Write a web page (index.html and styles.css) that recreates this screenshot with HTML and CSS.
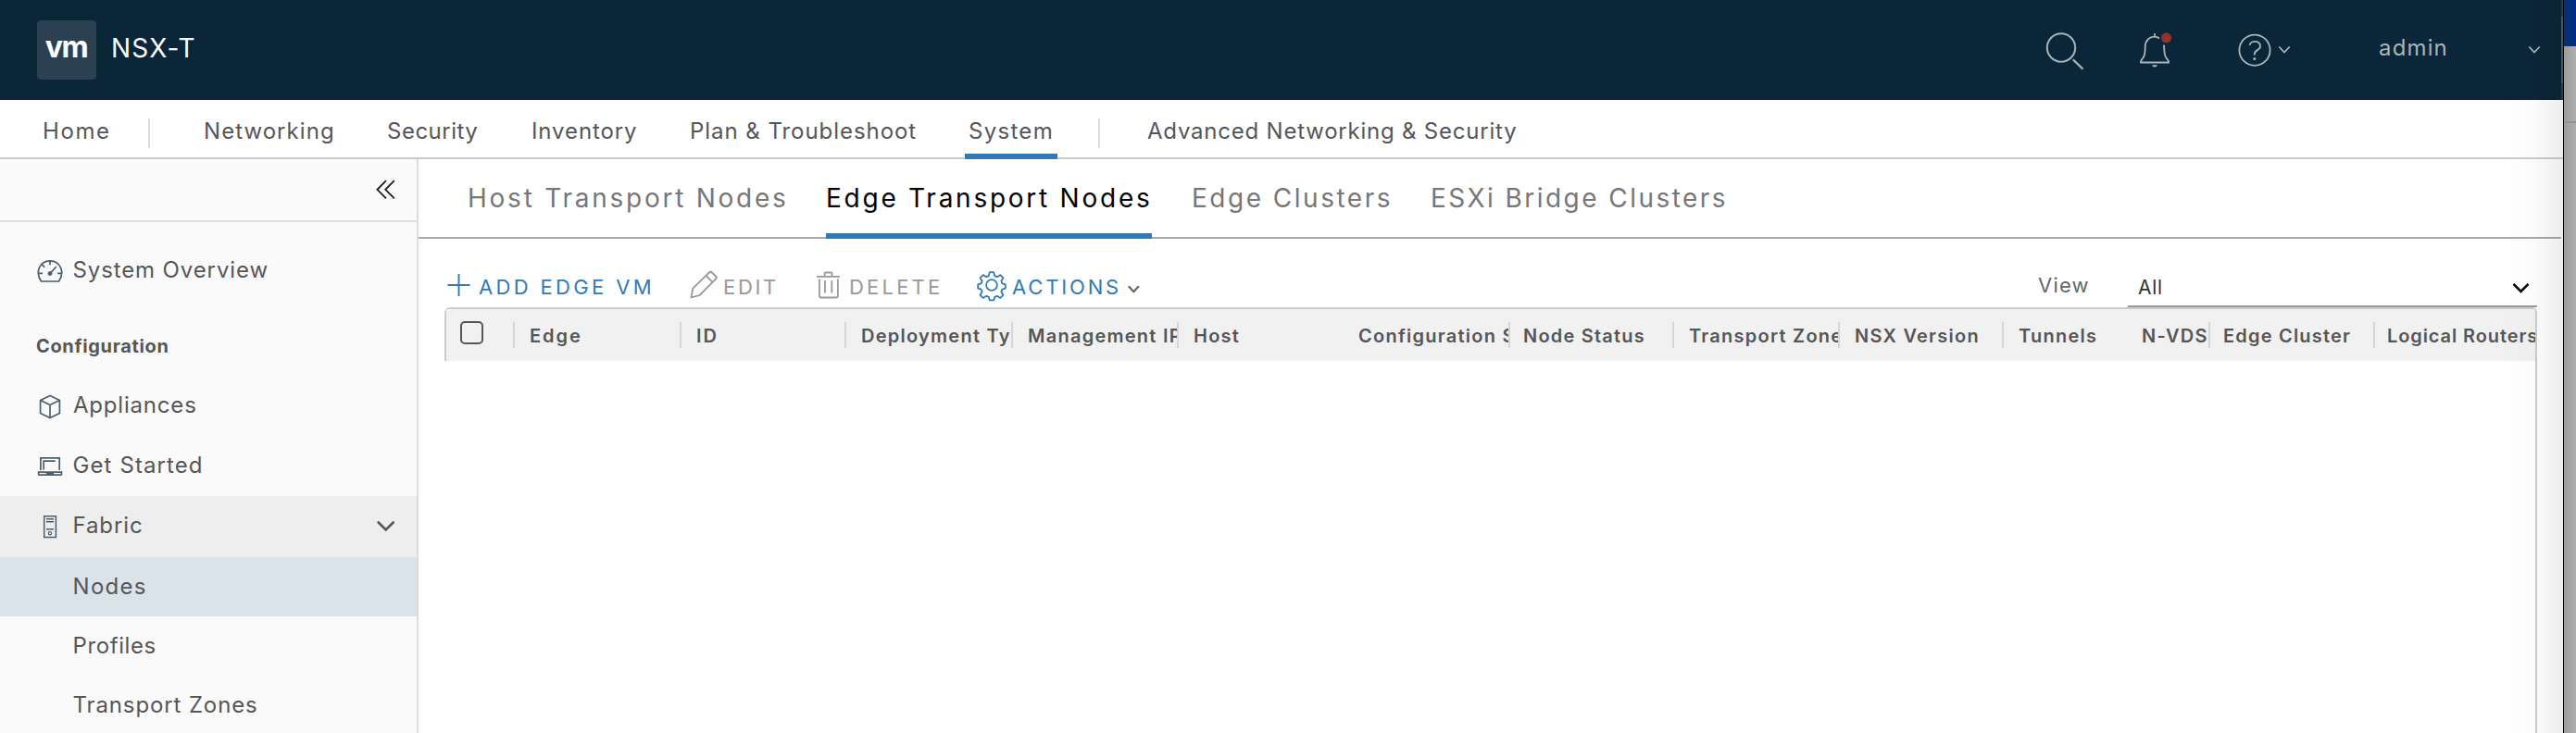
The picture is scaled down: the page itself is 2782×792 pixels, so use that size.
FILE: index.html
```html
<!DOCTYPE html>
<html lang="en">
<head>
<meta charset="utf-8">
<title>NSX-T</title>
<link rel="stylesheet" href="styles.css">
</head>
<body>
<div class="window">
  <header class="topbar">
    <div class="logo">vm</div>
    <div class="product">NSX-T</div>
    <div class="top-actions">
      <svg class="ico-search" viewBox="2200 0 60 108" fill="none" stroke="#a9b4bb" stroke-width="2"><circle cx="2226" cy="51.5" r="15.2"/><path d="M2239.5 65l9.3 9" stroke-width="2.4" stroke-linecap="round"/></svg>
      <svg class="ico-bell" viewBox="2300 0 60 108" fill="none" stroke="#a9b4bb" stroke-width="1.8"><path d="M2332 41.5Q2329.500 39.600 2327 39.600C2320.500 39.600 2316.700 44.500 2316.700 50.500C2316.700 60 2315.500 61.500 2312 66V67.500H2342V66C2338 61 2337.500 59 2337.300 53.500L2337 48.500M2327 36v4"/><path d="M2324 70.300h6q-.6 2.200-3 2.200t-3-2.200z" fill="#a9b4bb" stroke="none"/><circle cx="2339.600" cy="40.800" r="5.500" fill="#93332a" stroke="none"/></svg>
      <svg class="ico-help" viewBox="2410 0 70 108" fill="none" stroke="#a9b4bb" stroke-width="1.8"><circle cx="2435" cy="54.200" r="16.600"/><path d="M2429.500 48.800C2430.500 43.500 2441 43.300 2441 50C2441 54.800 2434.800 53.500 2434.800 58.500V59.600"/><circle cx="2434.800" cy="63.500" r="1.500" fill="#a9b4bb" stroke="none"/><path d="M2461.300 50.500l5.700 6 5.700-6"/></svg>
      <div class="user">admin</div>
      <svg class="ico-user" viewBox="2720 0 40 108" fill="none" stroke="#a9b4bb" stroke-width="1.8"><path d="M2731.300 50.500l5.700 6 5.700-6"/></svg>
    </div>
  </header>
  <nav class="mainnav">
    <a class="home">Home</a><i></i>
    <a class="n-net">Networking</a>
    <a class="n-sec">Security</a>
    <a class="n-inv">Inventory</a>
    <a class="n-plan">Plan &amp; Troubleshoot</a>
    <a class="n-sys active">System</a><i></i>
    <a class="n-adv">Advanced Networking &amp; Security</a>
  </nav>
  <div class="body">
    <aside class="sidebar">
      <div class="collapse"><svg viewBox="405 172 24 66" fill="none" stroke="#222" stroke-width="1.900"><path d="M417 195.200l-9.500 9.600 9.500 9.600M425.800 195.200l-9.500 9.600 9.500 9.600"/></svg></div>
      <div class="item overview">
        <svg viewBox="40 260 28 64" fill="none" stroke="#4d5f6e" stroke-width="1.700"><path d="M44.500 304C37.500 294 43 281.800 54 281.800S70.500 294 63.500 304zM54 282v4.200M45.600 286.200l2.600 2.600M41.800 295.300h4.200M62.200 295.300h4.200M55 294.500l5.800-6.500"/><circle cx="54" cy="295.500" r="2" fill="#4d5f6e" stroke-width="1"/></svg>
        <span>System Overview</span></div>
      <div class="heading">Configuration</div>
      <div class="item">
        <svg viewBox="40 406 28 65" fill="none" stroke="#4d5f6e" stroke-width="1.700" stroke-linejoin="round"><path d="M54 427.400l10.400 5v14L54 451.400l-10.400-5v-14zM43.600 432.400L54 437.400l10.400-5M54 437.400v14"/></svg>
        <span class="appl">Appliances</span></div>
      <div class="item">
        <svg viewBox="40 471 28 65" fill="none" stroke="#4d5f6e" stroke-width="1.700"><path d="M43.900 508v-13.200h20.300V508M47.200 507.500v-9.300h12.500M41.600 510.200h24.900v2q0 1-1 1h-22.900q-1 0-1-1zM50 511.500h8"/></svg>
        <span class="get">Get Started</span></div>
      <div class="item group">
        <svg viewBox="40 536 28 66" fill="none" stroke="#4d5f6e" stroke-width="1.500"><path d="M47.700 557.700h12.700v22.700H47.700zM50 560.800h8M50 563.800h8M50 571.800h8"/><circle cx="54" cy="576.200" r="1.600" stroke-width="1.200"/></svg>
        <span>Fabric</span>
        <svg class="caret" viewBox="405 536 24 66" fill="none" stroke="#565656" stroke-width="2.600" stroke-linecap="round"><path d="M408.700 564.500l8 8 8-8"/></svg></div>
      <div class="item sub selected"><span>Nodes</span></div>
      <div class="item sub"><span class="prof">Profiles</span></div>
      <div class="item sub"><span>Transport Zones</span></div>
    </aside>
    <main class="content">
      <div class="tabs">
        <a class="t-host">Host Transport Nodes</a>
        <a class="t-edge active">Edge Transport Nodes</a>
        <a class="t-clus">Edge Clusters</a>
        <a class="t-esxi">ESXi Bridge Clusters</a>
      </div>
      <div class="toolbar">
        <a class="b-add"><svg viewBox="480 258 36 74" fill="none" stroke="#327ab7" stroke-width="1.900"><path d="M483.500 308h24M495.500 296v24"/></svg>ADD EDGE VM</a>
        <a class="b-edit"><svg viewBox="744 258 36 74" fill="none" stroke="#999" stroke-width="1.800" stroke-linejoin="round"><path d="M746.500 321.300l1.800-9.600 18.100-17.700q1-1 2 0l5 5q1 1 0 2l-17.800 18zM762.800 298.200l6.700 6.700"/></svg>EDIT</a>
        <a class="b-del"><svg viewBox="880 258 36 74" fill="none" stroke="#999" stroke-width="1.800"><path d="M882 298.800h25M890.500 298v-2.500q0-1 1-1h6q1 0 1 1v2.500M884.900 301.500v18q0 2 2 2h16q2 0 2-2v-18M891 303v13.500M898.300 303v13.500"/></svg>DELETE</a>
        <a class="b-act"><svg viewBox="1054 258 38 74" fill="none" stroke="#327ab7" stroke-width="1.800" stroke-linejoin="round"><circle cx="1071" cy="308" r="5.900"/><path d="M1068.800 294.200h4.400l1 3.900 2.600 1.100 3.500-2.100 3.100 3.100-2.100 3.500 1.100 2.600 3.400 1v4.400l-3.400 1-1.100 2.600 2.100 3.500-3.100 3.100-3.500-2.100-2.600 1.100-1 3.400h-4.400l-1-3.400-2.600-1.100-3.500 2.100-3.100-3.100 2.100-3.500-1.100-2.600-3.400-1v-4.400l3.400-1 1.100-2.600-2.100-3.500 3.100-3.100 3.500 2.100 2.600-1.100z"/></svg>ACTIONS<svg class="act-caret" viewBox="1215 258 20 74" fill="none" stroke="#666" stroke-width="2.200"><path d="M1219.800 309.200l5.500 6 5.500-6"/></svg></a>
        <label class="view">View</label>
        <div class="select"><span>All</span><svg viewBox="2710 258 24 72" fill="none" stroke="#000" stroke-width="2.600"><path d="M2714.500 306.800l8 8.200 8-8.200"/></svg></div>
      </div>
      <div class="grid">
        <div class="head">
          <div class="c-check"><b></b></div>
          <div class="c180 bar"><span class="edge">Edge</span></div>
          <div class="c178 bar"><span class="id">ID</span></div>
          <div class="c180 bar">Deployment Type</div>
          <div class="c179 bar">Management IP</div>
          <div class="c178 bar">Host</div>
          <div class="c180">Configuration State</div>
          <div class="c177 bar tight">Node Status</div>
          <div class="c179 bar">Transport Zones</div>
          <div class="c177 bar">NSX Version</div>
          <div class="c133 bar">Tunnels</div>
          <div class="c90">N-VDS</div>
          <div class="c178 bar tight">Edge Cluster</div>
          <div class="c176 bar last">Logical Routers</div>
        </div>
      </div>
    </main>
  </div>
  <div class="edge-shade"></div>
</div>
<div class="desktop"><div class="sky"></div><div class="wall"></div></div>
</body>
</html>
```
FILE: styles.css
```css
* { box-sizing: border-box; }
body {
  margin: 0;
  width: 2782px;
  height: 792px;
  overflow: hidden;
  display: flex;
  font-family: Inter, "Open Sans", sans-serif;
  font-size: 24px;
  letter-spacing: 1px;
  color: #565656;
  background: #fff;
  white-space: nowrap;
}
svg { display: block; flex: none; }
.window { position: relative; width: 2768px; height: 792px; flex: none; display: flex; flex-direction: column; }

/* top bar */
.topbar { position: relative; flex: none; height: 108px; display: flex; background: #0b2639; }
.topbar::after { content: ""; position: absolute; right: 0; top: 0; width: 2px; height: 108px; background: linear-gradient(#2c414e 18px, #4a5d67 18px 90px, #2c414e 90px); }
.logo {
  margin: 22px 0 0 40px; width: 64px; height: 64px; border-radius: 4px;
  background: #2b4151; color: #fff; font-size: 32px; font-weight: 700;
  line-height: 58px; text-align: center; letter-spacing: -1.5px;
  padding-right: 1px;
}
.product { margin-left: 16px; color: #fff; font-size: 28px; line-height: 104px; letter-spacing: 1.2px; }
.top-actions { margin-left: auto; display: flex; padding-right: 8px; }
.ico-search { width: 60px; height: 108px; margin-right: 40px; }
.ico-bell { width: 60px; height: 108px; margin-right: 50px; }
.ico-help { width: 70px; height: 108px; }
.user { width: 151px; margin-left: 89px; line-height: 103px; color: #a9b4bb; letter-spacing: 1.15px; }
.ico-user { width: 40px; height: 108px; }

/* main navigation */
.mainnav { flex: none; height: 64px; display: flex; box-shadow: inset 0 -2px #ccc; line-height: 67px; }
.mainnav a { flex: none; height: 64px; }
.mainnav i { flex: none; width: 2px; height: 32px; margin-top: 20px; background: #ddd; }
.mainnav .home { margin-left: 46px; width: 114px; letter-spacing: 1.6px; }
.n-net { margin-left: 58px; width: 198px; letter-spacing: 1.05px; }
.n-sec { width: 156px; letter-spacing: .5px; }
.n-inv { width: 171px; letter-spacing: .9px; }
.n-plan { width: 297px; letter-spacing: .95px; }
.n-sys { width: 100px; padding-left: 4px; margin-right: 44px; letter-spacing: 1.3px; }
.n-adv { margin-left: 51px; letter-spacing: .78px; }
.active { border-bottom: 6px solid #327ab7; }

.body { flex: 1; display: flex; min-height: 0; }

/* sidebar */
.sidebar { flex: none; width: 452px; background: #fafafa; border-right: 2px solid #ddd; overflow: hidden; }
.collapse { height: 68px; border-bottom: 2px solid #ddd; padding-left: 405px; }
.collapse svg { width: 24px; height: 66px; }
.item { height: 65px; padding-left: 40px; display: flex; line-height: 64px; }
.item > svg { width: 28px; height: 100%; }
.item span { margin-left: 10.5px; letter-spacing: .88px; }
.item .appl { margin-left: 11px; letter-spacing: .8px; }
.item .get { letter-spacing: 1.1px; }
.overview { height: 64px; line-height: 63px; margin-top: 20px; }
.heading { height: 41px; margin: 30px 0 11px; padding-left: 39px; line-height: 41px; font-size: 20px; font-weight: 700; letter-spacing: .65px; }
.item.group { height: 66px; line-height: 63px; background: #eee; }
.item .caret { width: 24px; margin-left: auto; margin-right: 21px; }
.item.sub { height: 64px; padding-left: 68px; line-height: 63px; }
.item.selected { background: #dae3ea; }
.selected span { letter-spacing: 1.3px; }
.item .prof { letter-spacing: .6px; }

/* content tabs */
.content { flex: none; width: 2316px; }
.tabs { height: 86px; width: 2314px; display: flex; box-shadow: inset 0 -2px #aaa; font-size: 28px; line-height: 85px; color: #777; letter-spacing: 2.75px; }
.tabs a { flex: none; height: 86px; }
.t-host { margin-left: 53px; width: 387px; }
.t-edge { width: 352px; color: #000; }
.t-clus { margin-left: 43px; width: 258px; letter-spacing: 2.5px; }
.t-esxi { letter-spacing: 2.45px; }

/* toolbar */
.toolbar { height: 74px; display: flex; font-size: 22px; line-height: 104px; color: #999; }
.toolbar a { flex: none; height: 74px; display: flex; letter-spacing: 3.2px; }
.toolbar a svg { width: 36px; height: 74px; }
.b-add { margin-left: 28px; width: 264px; color: #327ab7; }
.toolbar .b-add { letter-spacing: 3.35px; }
.b-add svg { margin-right: 1px; }
.b-edit { width: 136px; }
.toolbar .b-edit { letter-spacing: 2.7px; }
.b-edit svg, .b-del svg { margin-right: 1px; }
.b-del { width: 174px; }
.b-act { color: #327ab7; }
.toolbar .b-act { letter-spacing: 2.85px; }
.toolbar .b-act svg { width: 38px; margin-right: 1px; }
.toolbar .b-act .act-caret { width: 20px; margin-left: 3px; }
.view { margin-left: auto; width: 97px; line-height: 101px; color: #666; letter-spacing: 1.2px; }
.select { width: 442px; margin-right: 28px; border-bottom: 2px solid #999; display: flex; justify-content: space-between; padding: 0 6px 0 11px; font-size: 21px; line-height: 105px; color: #333; letter-spacing: .7px; }
.select svg { width: 24px; height: 72px; }

/* data grid */
.grid { width: 2260px; margin-left: 28px; height: 460px; border-top: 2px solid #ccc; border-right: 2px solid #ccc; border-radius: 6px 6px 0 0; overflow: hidden; }
.head { height: 56px; display: flex; background: #f1f1f1; border-left: 2px solid #ccc; font-size: 20px; font-weight: 600; line-height: 58px; letter-spacing: 1.25px; }
.head > div { flex: none; position: relative; height: 56px; overflow: hidden; padding-left: 18px; }
.head .bar { background: linear-gradient(#d6d6d6, #d6d6d6) 0 14px / 2px 28px no-repeat; }
.head .c-check { width: 72px; padding: 13px 0 0 15px; }
.c-check b { display: block; width: 25px; height: 25px; border: 2px solid #565656; border-radius: 5px; }
.c180 { width: 180px; }
.c179 { width: 179px; }
.c178 { width: 178px; }
.c177 { width: 177px; }
.c176 { width: 176px; }
.c133 { width: 133px; }
.c90 { width: 90px; }
.edge, .id { letter-spacing: 2px; }
.head > .tight { padding-left: 16px; letter-spacing: 1.2px; }
.head > .last { padding-left: 15px; letter-spacing: .9px; }

/* window edge and desktop behind it */
.edge-shade { position: absolute; right: 0; top: 0; width: 64px; height: 792px; background: linear-gradient(90deg, rgba(0,0,0,0), rgba(0,0,0,.015) 50%, rgba(0,0,0,.07)); }
.desktop { flex: 1; border-left: 1px solid #000; display: flex; flex-direction: column; }
.sky { height: 50px; background: #003079; }
.wall { flex: 1; background: linear-gradient(transparent 81px, #929296 81px 83px, transparent 83px), linear-gradient(90deg, #9c9c9c, #aeaeae); }
```
